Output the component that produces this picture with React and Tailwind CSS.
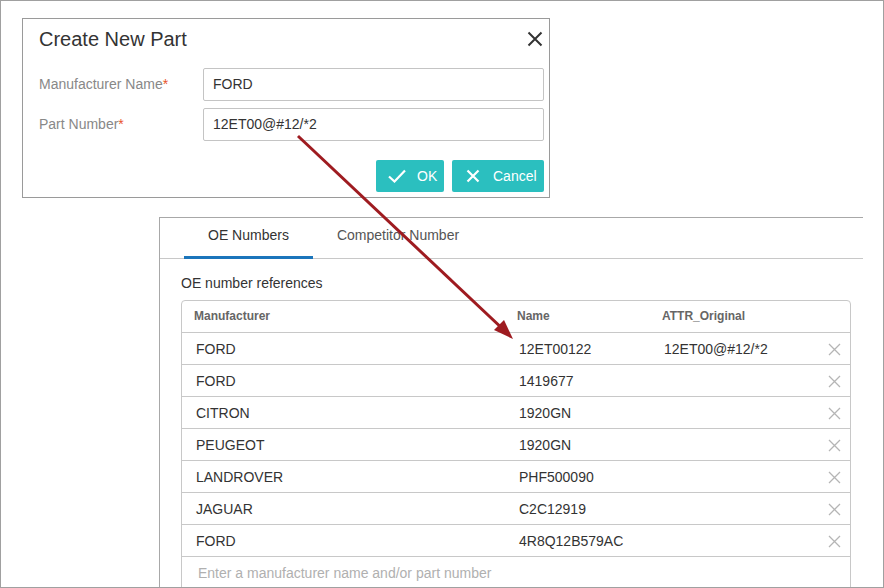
import React from 'react';

const ROWS = [
  { mfr: 'FORD', name: '12ET00122', attr: '12ET00@#12/*2' },
  { mfr: 'FORD', name: '1419677', attr: '' },
  { mfr: 'CITRON', name: '1920GN', attr: '' },
  { mfr: 'PEUGEOT', name: '1920GN', attr: '' },
  { mfr: 'LANDROVER', name: 'PHF500090', attr: '' },
  { mfr: 'JAGUAR', name: 'C2C12919', attr: '' },
  { mfr: 'FORD', name: '4R8Q12B579AC', attr: '' },
];

const font = { fontFamily: '"Liberation Sans", Arial, sans-serif' };

const RemoveX = () => (
  <svg width="13" height="13" viewBox="0 0 13 13">
    <path d="M1 1 L12 12 M12 1 L1 12" stroke="#b5b5b5" strokeWidth="1.3" fill="none" />
  </svg>
);

// ─── DIALOG ──────────────────────────────────────────────────────────────────
const CreatePartDialog = () => (
  <div className="ml-[21px] mt-[17px] w-[528px] h-[180px] border border-[#9a9a9a] bg-white flex flex-col pl-[16px] pr-[5px]">
    <div className="flex items-center justify-between h-[37px] pt-[2px] pr-[1px]">
      <span className="text-[20px] text-[#333]">Create New Part</span>
      <svg width="16" height="16" viewBox="0 0 16 16">
        <path d="M1.5 1.5 L14.5 14.5 M14.5 1.5 L1.5 14.5" stroke="#333" strokeWidth="2" fill="none" />
      </svg>
    </div>
    <div className="flex items-center mt-[12px] h-[33px]">
      <label className="w-[164px] text-[14px] text-[#888]">
        Manufacturer Name<span className="text-[#e8532b]">*</span>
      </label>
      <div className="w-[341px] h-[33px] border border-[#c4c4c4] rounded-[2px] flex items-center px-[9px] text-[14px] text-[#333]">FORD</div>
    </div>
    <div className="flex items-center mt-[7px] h-[33px]">
      <label className="w-[164px] text-[14px] text-[#888]">
        Part Number<span className="text-[#e8532b]">*</span>
      </label>
      <div className="w-[341px] h-[33px] border border-[#c4c4c4] rounded-[2px] flex items-center px-[9px] text-[14px] text-[#333]">12ET00@#12/*2</div>
    </div>
    <div className="flex justify-end gap-[8px] mt-[19px]">
      <button className="w-[68px] h-[32px] rounded-[2px] bg-[#2bbfbf] text-white text-[14px] flex items-center pl-[12px] gap-[11px]">
        <svg width="18" height="14" viewBox="0 0 18 14">
          <path d="M1 7.5 L6.5 12.5 L17 1.5" stroke="#fff" strokeWidth="2.2" fill="none" />
        </svg>
        OK
      </button>
      <button className="w-[92px] h-[32px] rounded-[2px] bg-[#2bbfbf] text-white text-[14px] flex items-center pl-[14px] gap-[13px]">
        <svg width="14" height="14" viewBox="0 0 14 14">
          <path d="M1.5 1.5 L12.5 12.5 M12.5 1.5 L1.5 12.5" stroke="#fff" strokeWidth="2.2" fill="none" />
        </svg>
        Cancel
      </button>
    </div>
  </div>
);

// ─── OE NUMBERS PANEL ────────────────────────────────────────────────────────
const OePanel = () => (
  <div className="ml-[158px] mt-[19px] w-[704px] border-t border-l border-[#a8a8a8] bg-white">
    <div className="flex h-[41px] border-b border-[#c8c8c8] pl-[24px]">
      <div className="px-[24px] flex items-center text-[14px] text-[#333] border-b-[3px] border-[#1b75bb] pb-[4px] mb-[-1px]">OE Numbers</div>
      <div className="px-[24px] flex items-center text-[14px] text-[#555] pb-[6px]">Competitor Number</div>
    </div>
    <div className="pl-[21px] pr-[12px]">
      <div className="h-[41px] flex items-center pt-[7px] text-[14px] text-[#333]">OE number references</div>
      <div className="border border-[#c8c8c8] rounded-t-[4px]">
        <div className="flex h-[32px] items-center pb-[2px] text-[12px] font-bold text-[#666] border-b border-[#c8c8c8]">
          <div className="w-[335px] pl-[12px]">Manufacturer</div>
          <div className="w-[145px]">Name</div>
          <div className="flex-1">ATTR_Original</div>
        </div>
        {ROWS.map((r, i) => (
          <div key={i} className="flex h-[32px] items-center pt-[2px] text-[14px] text-[#333] border-b border-[#c8c8c8]">
            <div className="w-[337px] pl-[14px]">{r.mfr}</div>
            <div className="w-[145px]">{r.name}</div>
            <div className="flex-1">{r.attr}</div>
            <div className="w-[22px] flex items-center"><RemoveX /></div>
          </div>
        ))}
        <div className="h-[32px] flex items-center pl-[16px] text-[14px] text-[#b0b0b0]">
          Enter a manufacturer name and/or part number
        </div>
      </div>
    </div>
  </div>
);

export default function App() {
  return (
    <div className="relative w-[884px] h-[588px] overflow-hidden bg-white border border-[#a0a0a0] box-border" style={font}>
      <CreatePartDialog />
      <OePanel />
      <svg className="absolute left-0 top-0 pointer-events-none" width="884" height="588" viewBox="1 1 884 588">
        <line x1="298" y1="136" x2="506" y2="332" stroke="#9e1b20" strokeWidth="3" />
        <polygon points="513,339 494,330 504,320" fill="#9e1b20" />
      </svg>
    </div>
  );
}
